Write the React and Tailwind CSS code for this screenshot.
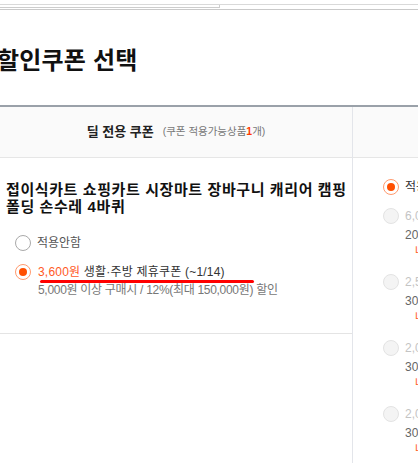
import React from 'react';

const otherCoupons = [
  { amount: '6,000원 생활·주방 제휴쿠폰', cond: '20,000원 이상 구매시 / 10%(최대 6,000원) 할인', note: '나의 쿠폰 중복 사용불가' },
  { amount: '2,500원 생활·주방 제휴쿠폰', cond: '30,000원 이상 구매시 / 2,500원 할인', note: '나의 쿠폰 중복 사용불가' },
  { amount: '2,000원 장바구니 쿠폰', cond: '30,000원 이상 구매시 / 2,000원 할인', note: '나의 쿠폰 중복 사용불가' },
  { amount: '2,000원 플러스 쿠폰', cond: '30,000원 이상 구매시 / 2,000원 할인', note: '나의 쿠폰 중복 사용불가' },
];

function Radio({ state }) {
  if (state === 'on') {
    return (
      <span className="w-4 h-4 shrink-0 rounded-full border border-[#ff9a6e] bg-white flex items-center justify-center">
        <span className="w-[8px] h-[8px] rounded-full bg-[#ff4f00]" />
      </span>
    );
  }
  if (state === 'disabled') {
    return <span className="w-4 h-4 shrink-0 rounded-full border border-[#e3e3e3] bg-[#f4f4f4]" />;
  }
  return <span className="w-4 h-4 shrink-0 rounded-full border border-[#a9a9a9] bg-white" />;
}

export default function App() {
  return (
    <div className="w-[418px] h-[463px] overflow-hidden bg-white font-['Liberation_Sans','Noto_Sans_CJK_KR',sans-serif]">
      {/* top frame lines */}
      <div className="h-[4px]" />
      <div className="border-t border-[#d9d9d9]">
        <div className="h-[3px] w-[220px] border-r border-b border-[#cdcdcd]" />
      </div>
      <div className="mt-[1px] border-t border-[#c9c9c9]" />

      <h1 className="mt-[36px] -ml-[3px] text-[24px] leading-[30px] font-bold tracking-[0.2px] text-[#111] whitespace-nowrap">
        할인쿠폰 선택
      </h1>

      <div className="mt-[29px] border-t-2 border-[#9aa1a9] flex">
        {/* left column */}
        <div className="w-[353px] shrink-0 border-r border-[#e3e5ea] h-[400px]">
          <div className="h-[51px] bg-[#fafafa] border-b border-[#e6e6e6] flex items-center justify-center whitespace-nowrap">
            <span className="text-[13px] font-bold text-[#222]">딜 전용 쿠폰</span>
            <span className="ml-[9px] text-[10.5px] text-[#777]">
              (쿠폰 적용가능상품<span className="text-[#ff3b00] font-bold">1</span>개)
            </span>
          </div>
          <div className="h-[176px] border-b border-[#e4e4e4] pt-[23px] pl-[6px]">
            <p className="text-[15px] leading-[17px] font-bold tracking-[0.6px] break-keep text-[#111]">
              접이식카트 쇼핑카트 시장마트 장바구니 캐리어 캠핑 폴딩 손수레 4바퀴
            </p>
            <div className="mt-[20px] ml-[9px] flex items-center gap-[6px] h-4">
              <Radio />
              <span className="text-[12px] text-[#555] whitespace-nowrap">적용안함</span>
            </div>
            <div className="relative">
              <div className="mt-[13px] ml-[9px] flex items-center gap-[7px] h-4 whitespace-nowrap">
                <Radio state="on" />
                <span className="text-[12px] text-[#333] tracking-[0.2px]">
                  <span className="text-[#ff5a1f]">3,600원</span> 생활·주방 제휴쿠폰 (~1/14)
                </span>
              </div>
              <div className="absolute left-[34px] top-[16px] w-[214px] h-[3px] rounded-full bg-[#ff0000]" />
              <p className="mt-[3px] pl-[32px] text-[12px] leading-[15px] text-[#777] whitespace-nowrap tracking-tight">
                5,000원 이상 구매시 / 12%(최대 150,000원) 할인
              </p>
            </div>
          </div>
        </div>

        {/* right column */}
        <div className="flex-1 min-w-0">
          <div className="h-[51px] bg-[#fafafa] border-b border-[#e6e6e6]" />
          <div className="pt-[21px] pl-[30px] whitespace-nowrap">
            <div className="flex items-center gap-[6px] h-4">
              <Radio state="on" />
              <span className="text-[12px] text-[#333]">적용안함</span>
            </div>
            <div className="mt-[12px]">
              {otherCoupons.map((c, i) => (
                <div key={i} className="h-[66px] pt-[1px]">
                  <div className="flex items-center gap-[6px] h-4">
                    <Radio state="disabled" />
                    <span className="text-[12px] text-[#c4c4c4]">{c.amount}</span>
                  </div>
                  <p className="mt-[4px] pl-[22px] text-[12px] leading-[14px] text-[#666]">{c.cond}</p>
                  <p className="mt-[3px] pl-[32px] text-[11px] leading-[12px] text-[#ff5a1f]">{c.note}</p>
                </div>
              ))}
            </div>
          </div>
        </div>
      </div>
    </div>
  );
}
